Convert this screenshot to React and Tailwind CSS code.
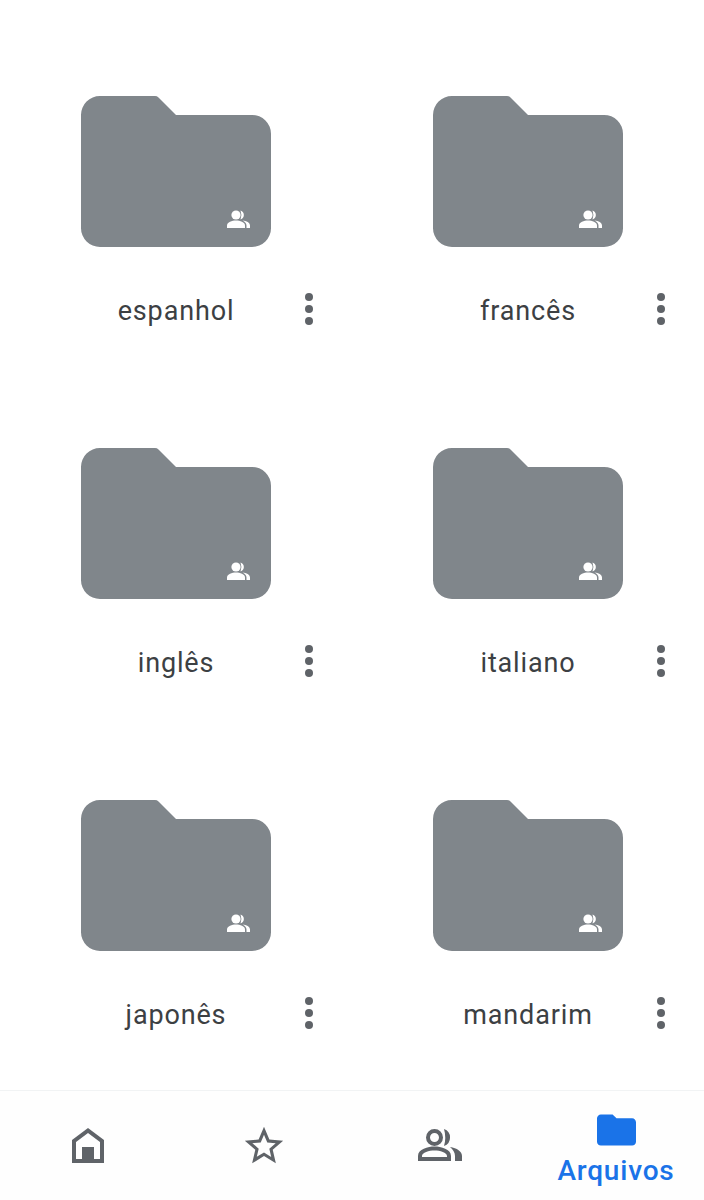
import React from 'react';

const folders = ['espanhol', 'francês', 'inglês', 'italiano', 'japonês', 'mandarim'];

const FolderCard = ({ name }) => {
  return (
    <div className="flex h-[352px] flex-col items-center">
      <div className="relative h-[151px] w-[190px]">
        <svg viewBox="0 0 190 152" preserveAspectRatio="none" className="block h-full w-full">
          <path
            d="M19 0H74Q76 0 77.500 1.500L95 19H171A19 19 0 0 1 190 38V133A19 19 0 0 1 171 152H19A19 19 0 0 1 0 133V19A19 19 0 0 1 19 0Z"
            fill="#80868b"
          />
        </svg>
        <svg viewBox="0 0 23 18" className="absolute left-[146px] top-[114px] h-[18px] w-[23px]" fill="#fff">
          <circle cx="9" cy="5" r="4.600" />
          <path d="M0 18v-2.500C0 12 5 10.500 9 10.500s9 1.500 9 5V18z" />
          <path d="M13.500 .5a4.700 4.700 0 0 1 0 9 12 12 0 0 0 0-9z" />
          <path d="M15.500 10.500c4 .5 7.500 2 7.500 5V18h-3.500v-2.500c0-2-1.500-3.700-4-5z" />
        </svg>
      </div>
      <div className="mt-[45px] grid w-full grid-cols-[65px_222px_44px] items-center">
        <div />
        <span className="text-center font-['Roboto',sans-serif] text-[27px] leading-[38px] tracking-[0.85px] text-[#3c4043]">
          {name}
        </span>
        <div className="flex -translate-y-[2px] flex-col items-center gap-[4px]">
          <span className="h-[8px] w-[8px] rounded-full bg-[#5f6368]" />
          <span className="h-[8px] w-[8px] rounded-full bg-[#5f6368]" />
          <span className="h-[8px] w-[8px] rounded-full bg-[#5f6368]" />
        </div>
      </div>
    </div>
  );
};

const App = () => {
  return (
    <div className="flex h-[1200px] w-[704px] flex-col overflow-hidden bg-white">
      <div className="min-h-0 flex-1 overflow-hidden pt-24">
        <div className="grid grid-cols-2">
          {folders.map((name) => (
            <FolderCard key={name} name={name} />
          ))}
        </div>
      </div>

      <nav className="grid h-[110px] grid-cols-4 border-t border-[#f1f3f4] bg-[#fefefe]">
        <div className="flex items-start justify-center pt-[37px]">
          <svg viewBox="0 0 32 35" className="h-[35px] w-[32px]" fill="#5f6368">
            <path
              fillRule="evenodd"
              d="M16 0L32 12V35H0V12ZM16 5L4 14V31H28V14Z"
            />
            <rect x="10" y="19" width="12" height="14" />
          </svg>
        </div>
        <div className="flex items-start justify-center pt-[32px]">
          <svg viewBox="0 0 24 24" className="h-[46px] w-[46px]" fill="#5f6368">
            <path d="M22 9.240l-7.190-.620L12 2 9.190 8.630 2 9.240l5.460 4.730L5.820 21 12 17.270 18.180 21l-1.630-7.030L22 9.240zM12 15.400l-3.760 2.270 1-4.280-3.320-2.880 4.380-.380L12 6.100l1.710 4.040 4.380.380-3.320 2.880 1 4.280L12 15.400z" />
          </svg>
        </div>
        <div className="flex items-start justify-center pt-[38px]">
          <svg viewBox="0 0 44 32" className="h-[32px] w-[44px]" fill="#5f6368">
            <circle cx="16.500" cy="8.500" r="6.500" fill="none" stroke="#5f6368" strokeWidth="4" />
            <path
              fillRule="evenodd"
              d="M0 32v-5C0 20 10 17.500 16.500 17.500S33 20 33 27v5zM4 28H29v-1c0-3.500-7-5.500-12.500-5.500S4 23.500 4 27z"
            />
            <path d="M26 0a9 9 0 0 1 0 17 30 30 0 0 0 0-17z" />
            <path d="M32 18c7 1 12 4.500 12 9v5h-7v-5c0-3.500-2-6.500-5-9z" />
          </svg>
        </div>
        <div className="flex flex-col items-center pt-[23px]">
          <svg viewBox="2 4 20 16" className="h-[32px] w-[39px]" fill="#1a73e8">
            <path d="M10 4H4c-1.100 0-2 .9-2 2v12c0 1.100.9 2 2 2h16c1.100 0 2-.9 2-2V8c0-1.100-.9-2-2-2h-8l-2-2z" />
          </svg>
          <span className="mt-[8px] font-['Roboto',sans-serif] text-[28px] font-medium leading-[34px] tracking-[0.8px] text-[#1a73e8]">
            Arquivos
          </span>
        </div>
      </nav>
    </div>
  );
};

export default App;
